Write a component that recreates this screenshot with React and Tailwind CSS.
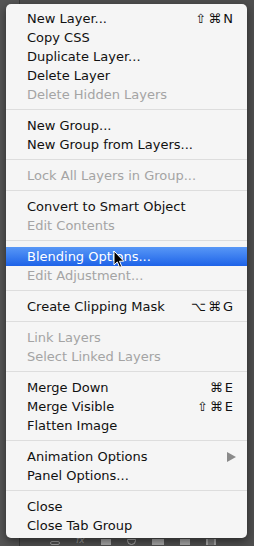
import React from 'react';

const sections = [
  [
    { label: 'New Layer...', keys: '⇧⌘N' },
    { label: 'Copy CSS' },
    { label: 'Duplicate Layer...' },
    { label: 'Delete Layer' },
    { label: 'Delete Hidden Layers', disabled: true },
  ],
  [
    { label: 'New Group...' },
    { label: 'New Group from Layers...' },
  ],
  [{ label: 'Lock All Layers in Group...', disabled: true }],
  [
    { label: 'Convert to Smart Object' },
    { label: 'Edit Contents', disabled: true },
  ],
  [
    { label: 'Blending Options...', active: true },
    { label: 'Edit Adjustment...', disabled: true },
  ],
  [{ label: 'Create Clipping Mask', keys: '⌥⌘G' }],
  [
    { label: 'Link Layers', disabled: true },
    { label: 'Select Linked Layers', disabled: true },
  ],
  [
    { label: 'Merge Down', keys: '⌘E' },
    { label: 'Merge Visible', keys: '⇧⌘E' },
    { label: 'Flatten Image' },
  ],
  [
    { label: 'Animation Options', submenu: true },
    { label: 'Panel Options...' },
  ],
  [
    { label: 'Close' },
    { label: 'Close Tab Group' },
  ],
];

const MenuItem = ({ item }) => {
  let rowClass = 'text-[#111111]';
  if (item.disabled) rowClass = 'text-[#a4a4a4]';
  if (item.active) rowClass = 'text-white bg-linear-to-b from-[#5897f6] to-[#1d62e8]';

  return (
    <div className={`flex items-center justify-between h-[19px] pl-[21px] pr-[14px] ${rowClass}`}>
      <span>{item.label}</span>
      {item.keys && (
        <span className="flex gap-[2px]">
          {item.keys.split('').map((k, i) => (
            <span key={i}>{k}</span>
          ))}
        </span>
      )}
      {item.submenu && (
        <svg width="9" height="10" viewBox="0 0 9 10" className="mr-[-3px]">
          <path d="M0 0 L9 5 L0 10 Z" fill="#8a8a8a" />
        </svg>
      )}
    </div>
  );
};

const Cursor = () => (
  <svg width="13" height="19" viewBox="0 0 13 19" className="absolute left-[113px] top-[250px]">
    <path
      d="M1 1 L1 15 L4.3 11.9 L6.6 17.3 L8.7 16.4 L6.5 11.2 L10.8 11.2 Z"
      fill="#000"
      stroke="#fff"
      strokeWidth="1"
      strokeLinejoin="round"
    />
  </svg>
);

export default function App() {
  return (
    <div className="relative w-[254px] h-[546px] overflow-hidden bg-[#4f4f4f] font-['DejaVu_Sans',sans-serif]">
      {/* panel behind the menu */}
      <div className="flex h-full">
        <div className="w-[20px] border-r border-[#3a3a3a] bg-[#555555]" />
        <div className="flex-1 flex flex-col">
          <div className="flex-1" />
          <div className="h-[12px] flex items-end gap-[16px] pl-[30px] pb-[1px] text-[#b5b5b5]">
            <div className="w-[10px] h-[4px] rounded-full border border-[#9a9a9a]" />
            <span className="text-[9px] leading-none italic text-[#9a9a9a]">fx</span>
            <div className="w-[10px] h-[6px] bg-[#a8a8a8]" />
            <div className="w-[9px] h-[6px] rounded-b-full border border-[#a8a8a8]" />
            <div className="w-[12px] h-[6px] bg-[#a8a8a8]" />
            <div className="w-[10px] h-[6px] bg-[#a8a8a8]" />
            <div className="w-[10px] h-[6px] border-x-2 border-[#a8a8a8] bg-[#7a7a7a]" />
          </div>
        </div>
      </div>

      {/* context menu */}
      <div className="absolute left-[6px] top-[4px] w-[241px] rounded-[5px] bg-[#f5f5f5] pt-[5px] pb-[3px] text-[13px] leading-[19px] shadow-[0_3px_10px_rgba(0,0,0,0.5)]">
        {sections.map((section, si) => (
          <div key={si}>
            {si > 0 && <div className="h-px bg-[#dddddd] mt-[5px] mb-[6px]" />}
            {section.map((item) => (
              <MenuItem key={item.label} item={item} />
            ))}
          </div>
        ))}
      </div>

      <Cursor />
    </div>
  );
}
